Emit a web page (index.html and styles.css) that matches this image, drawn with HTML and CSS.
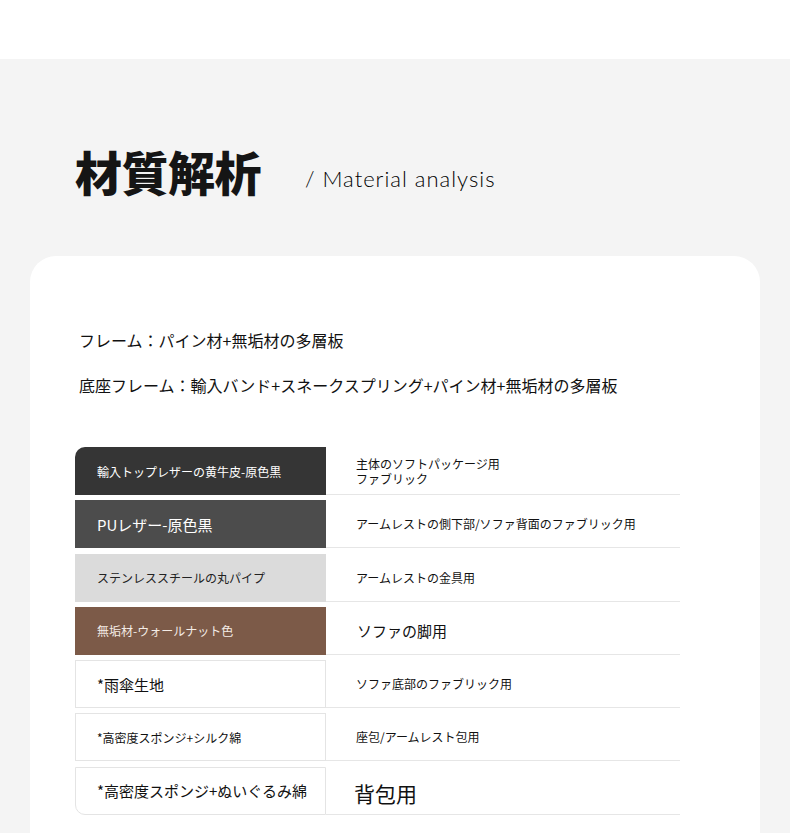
FILE: index.html
```html
<!DOCTYPE html>
<html lang="ja">
<head>
  <meta charset="UTF-8">
  <meta name="viewport" content="width=device-width, initial-scale=1.0">
  <title>材質解析</title>
  <link rel="stylesheet" href="styles.css">
</head>
<body>
  <div class="top-band"></div>

  <section class="section">
    <div class="heading">
      <h1>材質解析</h1>
      <span class="sub">/ Material analysis</span>
    </div>

    <div class="card">
      <p class="spec">フレーム：パイン材+無垢材の多層板</p>
      <p class="spec">底座フレーム：輸入バンド+スネークスプリング+パイン材+無垢材の多層板</p>

      <div class="materials">
        <div class="row">
          <div class="swatch black first">輸入トップレザーの黄牛皮-原色黒</div>
          <div class="use two-line">
            <span>主体のソフトパッケージ用</span>
            <span>ファブリック</span>
          </div>
        </div>
        <div class="row">
          <div class="swatch grey big">PUレザー-原色黒</div>
          <div class="use">アームレストの側下部/ソファ背面のファブリック用</div>
        </div>
        <div class="row">
          <div class="swatch light">ステンレススチールの丸パイプ</div>
          <div class="use">アームレストの金具用</div>
        </div>
        <div class="row">
          <div class="swatch walnut">無垢材-ウォールナット色</div>
          <div class="use big">ソファの脚用</div>
        </div>
        <div class="row">
          <div class="swatch plain big">*雨傘生地</div>
          <div class="use">ソファ底部のファブリック用</div>
        </div>
        <div class="row">
          <div class="swatch plain">*高密度スポンジ+シルク綿</div>
          <div class="use">座包/アームレスト包用</div>
        </div>
        <div class="row">
          <div class="swatch plain big last">*高密度スポンジ+ぬいぐるみ綿</div>
          <div class="use huge">背包用</div>
        </div>
      </div>
    </div>
  </section>
</body>
</html>
```

FILE: styles.css
```css
* {
  box-sizing: border-box;
}

body {
  margin: 0;
  background: #f4f4f4;
  font-family: "Noto Sans CJK JP", "Noto Sans", sans-serif;
  color: #222;
  overflow: hidden;
}

.top-band {
  height: 59px;
  background: #fff;
}

.section {
  padding: 0 30px;
}

.heading {
  display: flex;
  align-items: center;
  height: 197px;
  padding-left: 45px;
  padding-top: 26px;
}

h1 {
  margin: 0;
  font-size: 47px;
  font-weight: 900;
  letter-spacing: -0.5px;
  color: #151515;
  line-height: 1;
}

.sub {
  margin-left: 44px;
  margin-top: 16px;
  font-family: Lato, "Noto Sans", sans-serif;
  font-weight: 300;
  font-size: 22px;
  letter-spacing: 1px;
  color: #000;
}

.card {
  background: #fff;
  border-radius: 26px 26px 0 0;
  padding: 69px 80px 40px 45px;
  min-height: 600px;
}

.spec {
  margin: 0 0 0 4px;
  font-size: 16px;
  line-height: 30px;
  color: #111;
}

.spec + .spec {
  margin-top: 15px;
}

.materials {
  margin-top: 47px;
  display: flex;
  flex-direction: column;
  gap: 5.3px;
}

.row {
  display: flex;
  height: 48px;
}

.swatch {
  width: 251px;
  flex-shrink: 0;
  display: flex;
  align-items: center;
  padding-left: 22px;
  font-size: 12px;
}

.swatch.big {
  font-size: 15px;
}

.black {
  background: #353535;
  color: #fff;
}

.grey {
  background: #4c4c4c;
  color: #fff;
}

.light {
  background: #dbdbdb;
  color: #222;
}

.walnut {
  background: #7c5a48;
  color: #f4ece6;
}

.plain {
  background: #fff;
  border: 1px solid #e4e4e4;
  padding-left: 21px;
  color: #111;
}

.first {
  border-top-left-radius: 10px;
}

.last {
  border-bottom-left-radius: 10px;
}

.use {
  flex: 1;
  display: flex;
  align-items: center;
  padding-left: 30px;
  border-bottom: 1px solid #e6e6e6;
  font-size: 12px;
  color: #111;
}

.two-line {
  flex-direction: column;
  align-items: flex-start;
  justify-content: center;
  line-height: 15px;
  padding-top: 1px;
}

.use.big {
  font-size: 15px;
  padding-left: 31px;
}

.use.huge {
  font-size: 21px;
  padding-left: 28px;
  padding-top: 6px;
}
```
